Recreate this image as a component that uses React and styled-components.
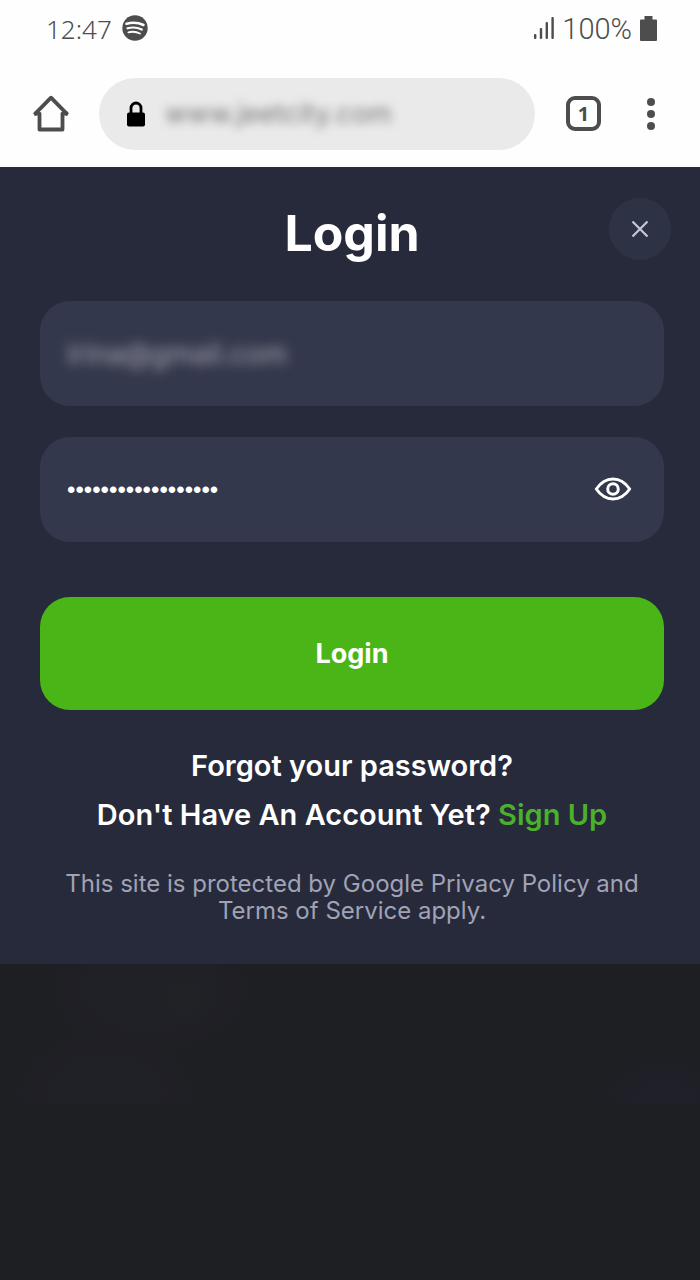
import React, { useState } from "react";
import styled, { createGlobalStyle } from "styled-components";

const GlobalStyle = createGlobalStyle`
  * {
    box-sizing: border-box;
  }

  body {
    margin: 0;
    background: #1e1f23;
    font-family: Inter, "Open Sans", sans-serif;
  }

  button,
  input {
    border: 0;
    margin: 0;
    padding: 0;
    background: none;
    color: inherit;
    font: inherit;
    outline: none;
  }

  button {
    cursor: pointer;
  }

  svg {
    display: block;
    flex-shrink: 0;
  }
`;

// Icons
function SpotifyIcon() {
  return (
    <svg width="26" height="26" viewBox="0 0 26 26" fill="none" aria-hidden="true">
      <circle cx="13" cy="13" r="12.7" fill="#4d4d4d" />
      <g stroke="#fff" strokeLinecap="round">
        <path d="M4.500 8.800c5.800-1.600 12-1.100 17 1.200" strokeWidth="2.500" />
        <path d="M5.500 13.300c5-1.400 10-.900 14.300 1.300" strokeWidth="2.200" />
        <path d="M6.400 17.300c4-1 8-.600 11.500 1.200" strokeWidth="1.900" />
      </g>
    </svg>
  );
}

function SignalIcon() {
  return (
    <svg width="20" height="22" viewBox="0 0 20 22" fill="#4d4d4d" aria-hidden="true">
      <rect x="0" y="17" width="2.400" height="5" rx="1" />
      <rect x="5.800" y="11" width="2.400" height="11" rx="1" />
      <rect x="11.600" y="5" width="2.400" height="17" rx="1" />
      <rect x="17.400" y="0" width="2.400" height="22" rx="1" />
    </svg>
  );
}

function BatteryIcon() {
  return (
    <svg width="17" height="25" viewBox="0 0 17 25" fill="#4d4d4d" aria-hidden="true">
      <path d="M4.500 0h8v3.500H16q1 0 1 1V24q0 1-1 1H1q-1 0-1-1V4.500q0-1 1-1h3.500z" />
    </svg>
  );
}

function HomeIcon() {
  return (
    <svg width="36" height="37" viewBox="0 0 36 37" fill="none" stroke="#4d4d4d" strokeWidth="3.800" aria-hidden="true">
      <path d="M1.300 19.600 18 2.700l16.700 16.900" strokeLinejoin="round" />
      <path d="M1 18.600h5.500V34.500h23V18.600H35" strokeLinejoin="round" />
    </svg>
  );
}

function LockIcon() {
  return (
    <svg width="18" height="26" viewBox="0 0 18 26" aria-hidden="true">
      <path d="M4 13V7a5 5 0 0 1 10 0v6" fill="none" stroke="#000" strokeWidth="2.800" />
      <rect x="0" y="11.500" width="18" height="14" rx="2" />
    </svg>
  );
}

function MoreIcon() {
  return (
    <svg width="8" height="32" viewBox="0 0 8 32" fill="#4d4d4d" aria-hidden="true">
      <circle cx="4" cy="4" r="4" />
      <circle cx="4" cy="16" r="4" />
      <circle cx="4" cy="28" r="4" />
    </svg>
  );
}

function CloseIcon() {
  return (
    <svg width="18" height="18" viewBox="0 0 18 18" stroke="#c6c8d6" strokeWidth="2.200" aria-hidden="true">
      <path d="m1.500 1.500 15 15M16.500 1.500l-15 15" />
    </svg>
  );
}

function EyeIcon() {
  return (
    <svg width="38" height="26" viewBox="0 0 38 26" fill="none" stroke="#fff" strokeWidth="3" aria-hidden="true">
      <path d="M2.300 12C7 5.200 12.800 2 19 2s12 3.200 16.700 10C31 18.800 25.200 22 19 22S7 18.800 2.300 12Z" strokeLinejoin="round" />
      <circle cx="19" cy="12" r="5.300" />
    </svg>
  );
}

function App() {
  const [email, setEmail] = useState("irina@gmail.com");
  const [password, setPassword] = useState("passwordpassword12");
  const [url, setUrl] = useState("www.jeetcity.com");
  const [visible, setVisible] = useState(false);

  return (
    <Page>
      <GlobalStyle />
      <StatusBar>
        <StatusGroup $gap={10}>
          <Clock>12:47</Clock>
          <SpotifyIcon />
        </StatusGroup>
        <StatusGroup $gap={8}>
          <SignalIcon />
          <BatteryLevel>100%</BatteryLevel>
          <BatteryIcon />
        </StatusGroup>
      </StatusBar>

      <BrowserBar>
        <IconButton aria-label="Home">
          <HomeIcon />
        </IconButton>
        <AddressBar>
          <LockIcon />
          <AddressInput aria-label="Address" value={url} onChange={(e) => setUrl(e.target.value)} />
        </AddressBar>
        <TabsButton aria-label="Open tabs">1</TabsButton>
        <IconButton aria-label="More">
          <MoreIcon />
        </IconButton>
      </BrowserBar>

      <Dialog role="dialog" aria-labelledby="login-title">
        <CloseButton aria-label="Close">
          <CloseIcon />
        </CloseButton>
        <Title id="login-title">Login</Title>

        <Form onSubmit={(e) => e.preventDefault()}>
          <Field>
            <EmailInput
              type="email"
              aria-label="Email"
              value={email}
              onChange={(e) => setEmail(e.target.value)}
            />
          </Field>
          <Field>
            <PasswordInput
              type={visible ? "text" : "password"}
              aria-label="Password"
              value={password}
              onChange={(e) => setPassword(e.target.value)}
            />
            <IconButton type="button" aria-label="Show password" onClick={() => setVisible(!visible)}>
              <EyeIcon />
            </IconButton>
          </Field>
          <SubmitButton type="submit">Login</SubmitButton>
        </Form>

        <Links>
          <TextLink href="#forgot">Forgot your password?</TextLink>
          <span>
            Don't Have An Account Yet?{" "}
            <TextLink href="#signup" $accent>
              Sign Up
            </TextLink>
          </span>
        </Links>
        <Notice>This site is protected by Google Privacy Policy and Terms of Service apply.</Notice>
      </Dialog>
      <Backdrop />
    </Page>
  );
}

// Styled Components
const Page = styled.div`
  display: flex;
  flex-direction: column;
  min-height: 100vh;
`;

const StatusBar = styled.div`
  display: flex;
  align-items: center;
  justify-content: space-between;
  height: 56px;
  padding: 0 43px 0 46px;
  background: #fefefe;
  color: #4d4d4d;
`;

const StatusGroup = styled.div`
  display: flex;
  align-items: center;
  gap: ${({ $gap }) => $gap}px;
`;

const Clock = styled.span`
  padding-top: 2px;
  font: 300 26px/36px "Noto Sans", sans-serif;
`;

const BatteryLevel = styled.span`
  padding-top: 2px;
  font: 300 29px/36px Roboto, sans-serif;
`;

const BrowserBar = styled.div`
  display: flex;
  align-items: center;
  height: 111px;
  padding: 4px 45px 0 33px;
  background: #fefefe;
  color: #4d4d4d;
`;

const IconButton = styled.button`
  flex-shrink: 0;
`;

const AddressBar = styled.div`
  display: flex;
  align-items: center;
  flex: 1;
  gap: 20px;
  min-width: 0;
  height: 72px;
  margin: 0 31px 0 30px;
  padding: 0 28px;
  border-radius: 36px;
  background: #eaeaea;
`;

const AddressInput = styled.input`
  flex: 1;
  min-width: 0;
  height: 48px;
  color: #777;
  font-size: 27px;
  filter: blur(5px);
`;

const TabsButton = styled.button`
  flex-shrink: 0;
  width: 35px;
  height: 35px;
  margin-right: 46px;
  border: 4px solid #4d4d4d;
  border-radius: 9px;
  font: 700 20px/24px "Noto Sans", sans-serif;
`;

const Dialog = styled.main`
  position: relative;
  padding: 36px 36px 40px 40px;
  background: #272a3b;
  color: #fff;
  text-align: center;
`;

const CloseButton = styled.button`
  position: absolute;
  top: 31px;
  right: 29px;
  display: grid;
  place-items: center;
  width: 62px;
  height: 62px;
  border-radius: 50%;
  background: #2d3245;
`;

const Title = styled.h1`
  margin: 0 0 38px;
  font-size: 50px;
  font-weight: 700;
  line-height: 60px;
`;

const Form = styled.form`
  display: flex;
  flex-direction: column;
  gap: 31px;
`;

const Field = styled.div`
  display: flex;
  align-items: center;
  height: 105px;
  padding: 0 32px 0 27px;
  border-radius: 30px;
  background: #34384c;
`;

const FieldInput = styled.input`
  flex: 1;
  min-width: 0;
  height: 60px;
`;

const EmailInput = styled(FieldInput)`
  color: #a8a8b2;
  font-size: 28px;
  filter: blur(6px);
`;

const PasswordInput = styled(FieldInput)`
  font: 24px "Liberation Sans", sans-serif;
`;

const SubmitButton = styled.button`
  height: 113px;
  margin-top: 24px;
  border-radius: 30px;
  background: #4ab516;
  font-size: 27px;
  font-weight: 700;
`;

const Links = styled.div`
  display: flex;
  flex-direction: column;
  align-items: center;
  margin-top: 31px;
  font-size: 29px;
  font-weight: 600;
  line-height: 49px;
`;

const TextLink = styled.a`
  color: ${({ $accent }) => ($accent ? "#4ab12a" : "#fff")};
  text-decoration: none;
`;

const Notice = styled.p`
  max-width: 600px;
  margin: 31px auto 0;
  color: #a0a3b5;
  font-size: 24px;
  line-height: 27px;
`;

const Backdrop = styled.div`
  height: 139px;
  background:
    radial-gradient(ellipse 24px 20px at 185px 34px, #212226 60%, transparent),
    radial-gradient(ellipse 110px 70px at 150px 25px, #202027 50%, transparent),
    radial-gradient(ellipse 100px 80px at 105px 139px, #202027 50%, transparent),
    radial-gradient(ellipse 90px 60px at 665px 139px, #1f2028 30%, transparent);
`;

export default App;
